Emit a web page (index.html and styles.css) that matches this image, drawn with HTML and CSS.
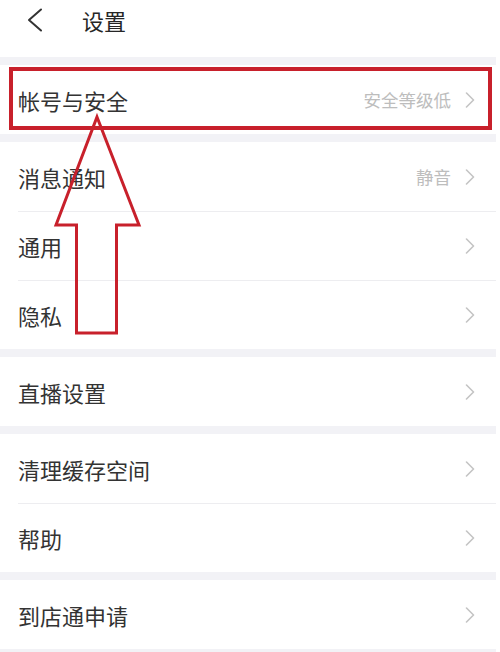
FILE: index.html
```html
<!DOCTYPE html>
<html lang="zh-CN">
<head>
<meta charset="utf-8">
<title>设置</title>
<link rel="stylesheet" href="styles.css">
</head>
<body>
<div class="page">
  <header class="topbar">
    <svg class="back" width="16" height="24" viewBox="0 0 16 24"><polyline points="14,1.5 2,12 14,22.5" fill="none" stroke="#333" stroke-width="2" stroke-linecap="round" stroke-linejoin="round"/></svg>
    <h1 class="title">设置</h1>
  </header>

  <section class="group">
    <div class="row"><span class="label">帐号与安全</span><span class="meta"><span class="sub">安全等级低</span><svg class="chev" width="10" height="16" viewBox="0 0 10 16"><polyline points="1.5,1 8.5,8 1.5,15" fill="none" stroke="#c4c4c4" stroke-width="1.6" stroke-linecap="round" stroke-linejoin="round"/></svg></span></div>
  </section>

  <section class="group">
    <div class="row"><span class="label">消息通知</span><span class="meta"><span class="sub">静音</span><svg class="chev" width="10" height="16" viewBox="0 0 10 16"><polyline points="1.5,1 8.5,8 1.5,15" fill="none" stroke="#c4c4c4" stroke-width="1.6" stroke-linecap="round" stroke-linejoin="round"/></svg></span></div>
    <div class="row"><span class="label">通用</span><span class="meta"><svg class="chev" width="10" height="16" viewBox="0 0 10 16"><polyline points="1.5,1 8.5,8 1.5,15" fill="none" stroke="#c4c4c4" stroke-width="1.6" stroke-linecap="round" stroke-linejoin="round"/></svg></span></div>
    <div class="row"><span class="label">隐私</span><span class="meta"><svg class="chev" width="10" height="16" viewBox="0 0 10 16"><polyline points="1.5,1 8.5,8 1.5,15" fill="none" stroke="#c4c4c4" stroke-width="1.6" stroke-linecap="round" stroke-linejoin="round"/></svg></span></div>
  </section>

  <section class="group">
    <div class="row"><span class="label">直播设置</span><span class="meta"><svg class="chev" width="10" height="16" viewBox="0 0 10 16"><polyline points="1.5,1 8.5,8 1.5,15" fill="none" stroke="#c4c4c4" stroke-width="1.6" stroke-linecap="round" stroke-linejoin="round"/></svg></span></div>
  </section>

  <section class="group">
    <div class="row"><span class="label">清理缓存空间</span><span class="meta"><svg class="chev" width="10" height="16" viewBox="0 0 10 16"><polyline points="1.5,1 8.5,8 1.5,15" fill="none" stroke="#c4c4c4" stroke-width="1.6" stroke-linecap="round" stroke-linejoin="round"/></svg></span></div>
    <div class="row"><span class="label">帮助</span><span class="meta"><svg class="chev" width="10" height="16" viewBox="0 0 10 16"><polyline points="1.5,1 8.5,8 1.5,15" fill="none" stroke="#c4c4c4" stroke-width="1.6" stroke-linecap="round" stroke-linejoin="round"/></svg></span></div>
  </section>

  <section class="group">
    <div class="row"><span class="label">到店通申请</span><span class="meta"><svg class="chev" width="10" height="16" viewBox="0 0 10 16"><polyline points="1.5,1 8.5,8 1.5,15" fill="none" stroke="#c4c4c4" stroke-width="1.6" stroke-linecap="round" stroke-linejoin="round"/></svg></span></div>
  </section>

  <svg class="annot" width="500" height="652" viewBox="0 0 500 652">
    <rect x="11" y="69" width="479" height="59" fill="none" stroke="#c8202b" stroke-width="4"/>
    <polygon points="97,117 139,225 116.5,225 116.5,333 76.5,333 76.5,225 56,225" fill="none" stroke="#c8202b" stroke-width="3" stroke-linejoin="miter"/>
  </svg>
</div>
</body>
</html>
```

FILE: styles.css
```css
html, body {
  margin: 0;
  padding: 0;
  background: #ffffff;
}

body {
  font-family: "Noto Sans CJK SC", "Noto Sans", sans-serif;
  color: #333333;
}

.page {
  position: relative;
  width: 496px;
  height: 652px;
  background: #f2f2f6;
  overflow: hidden;
}

.topbar {
  height: 57px;
  background: #ffffff;
  display: flex;
  align-items: flex-start;
  padding-top: 8px;
  box-sizing: border-box;
}

.back {
  margin-left: 27px;
  margin-top: 0px;
}

.title {
  margin: 0 0 0 39px;
  font-size: 22px;
  font-weight: 400;
  line-height: 24px;
  color: #262626;
}

.group {
  background: #ffffff;
  margin-top: 8px;
}

.row {
  height: 69px;
  margin-left: 18px;
  padding-right: 21px;
  display: flex;
  align-items: center;
  justify-content: space-between;
  box-sizing: border-box;
}

.row + .row {
  border-top: 1px solid #ededf0;
}

.label {
  font-size: 22px;
  color: #333333;
  letter-spacing: 0;
}

.meta {
  display: flex;
  align-items: center;
  gap: 14px;
}

.sub {
  font-size: 17.5px;
  color: #bdbdbd;
}

.chev {
  display: block;
}

.annot {
  position: absolute;
  left: 0;
  top: 0;
  pointer-events: none;
}
```
